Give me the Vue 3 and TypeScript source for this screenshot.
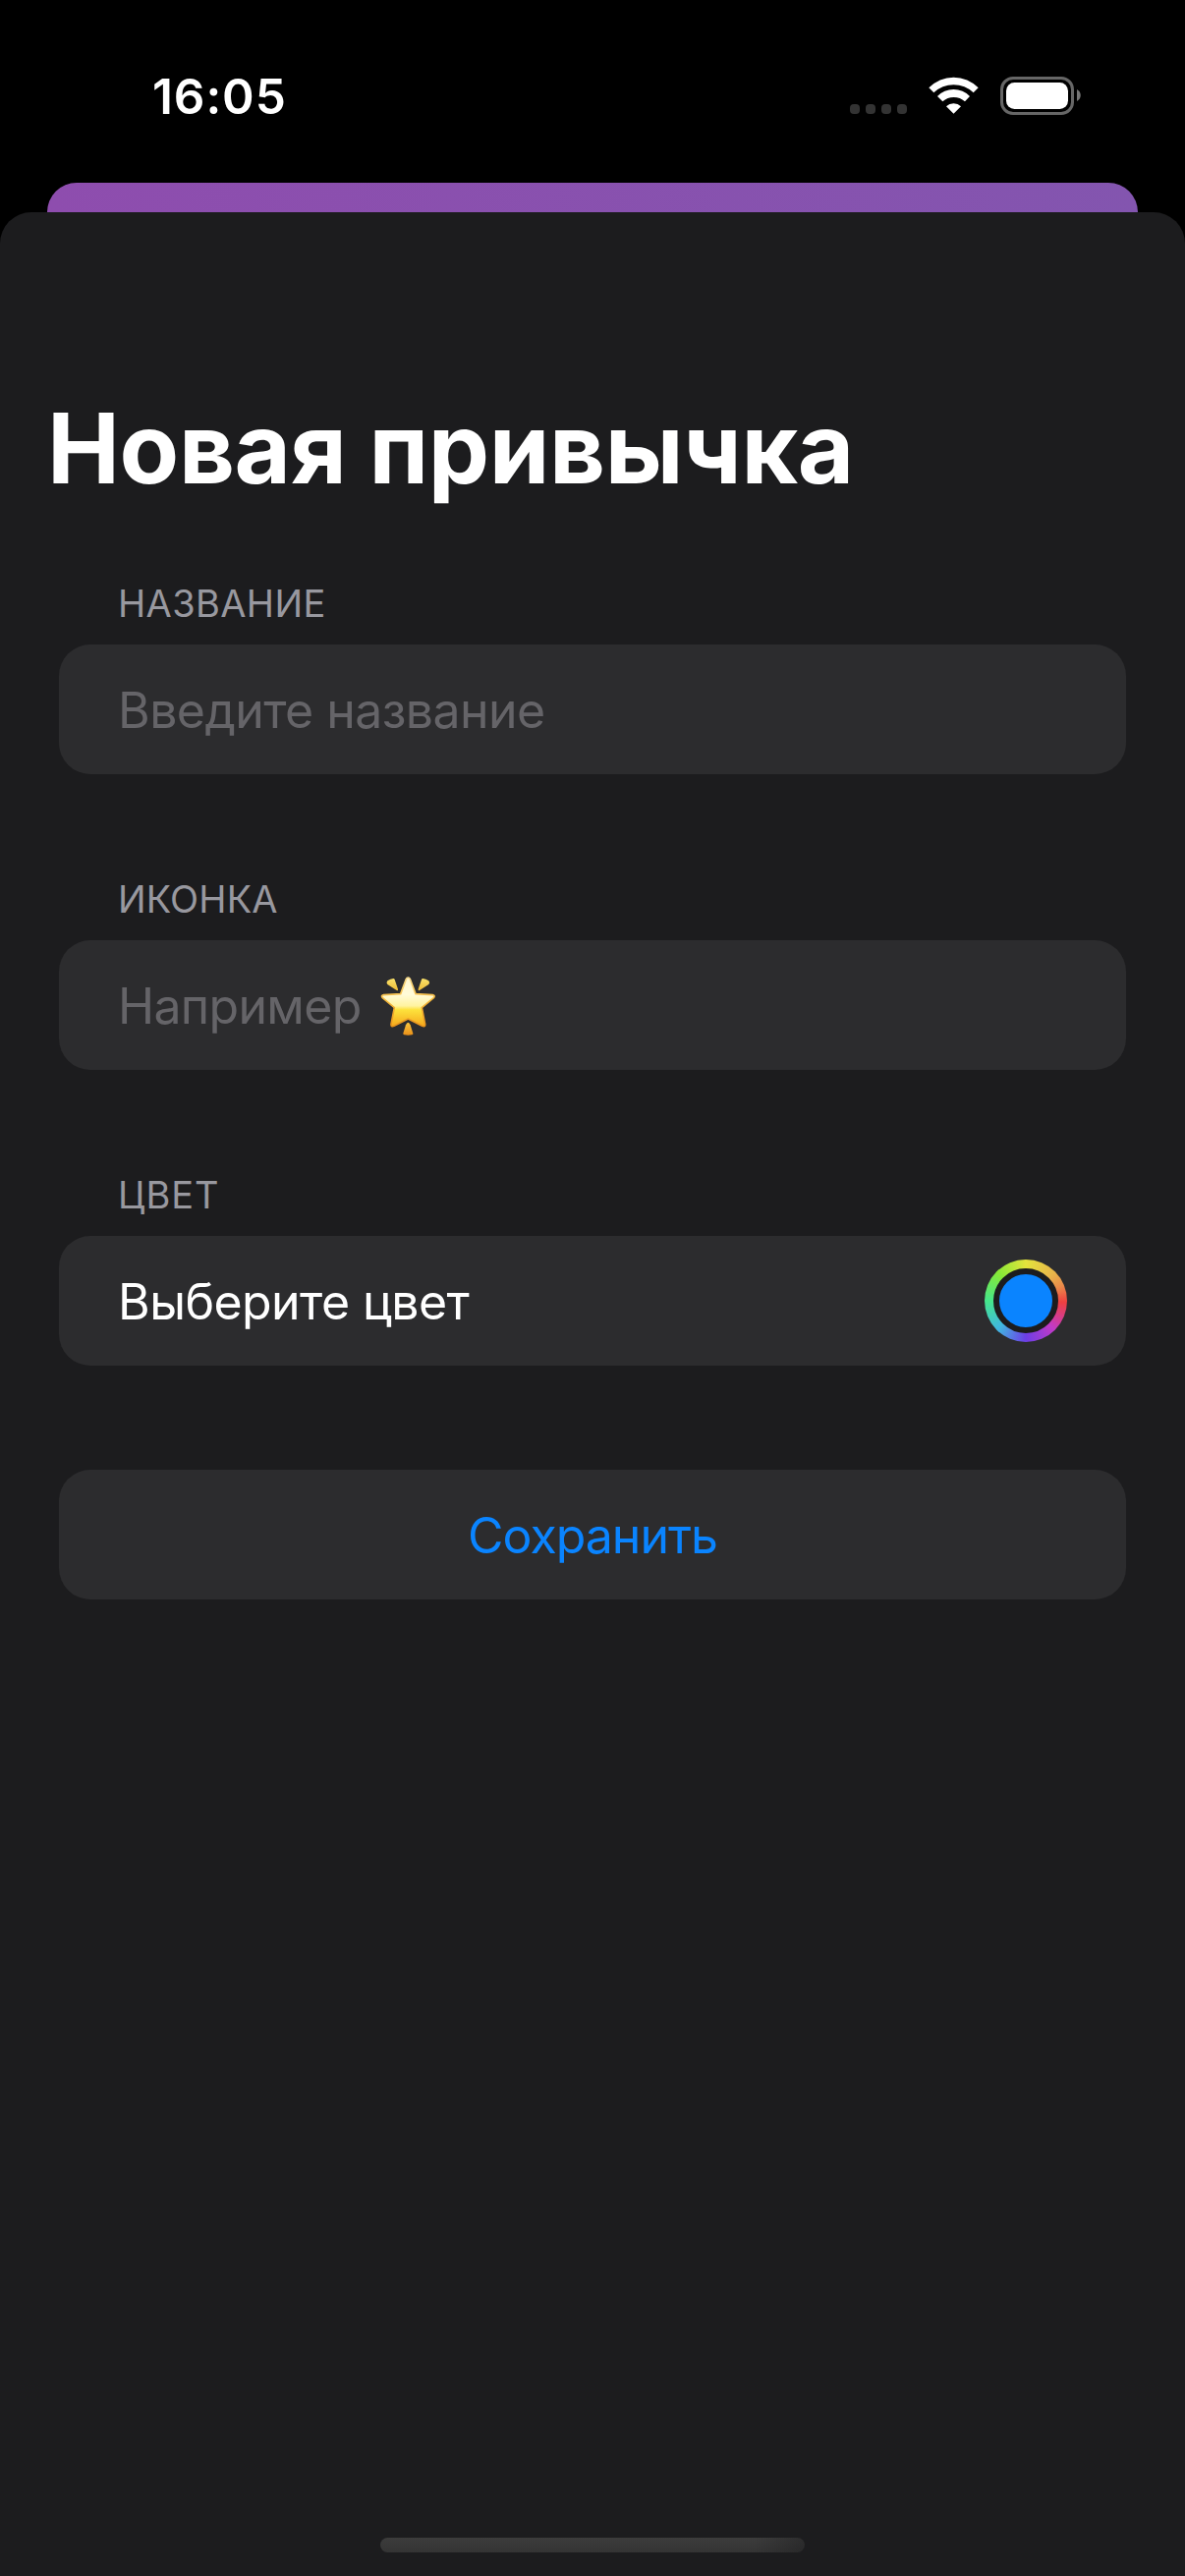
<script setup lang="ts">
interface Section {
  id: string
  label: string
  text: string
  kind: 'placeholder' | 'color'
  star?: boolean
}

const sections: Section[] = [
  { id: 'name', label: 'НАЗВАНИЕ', text: 'Введите название', kind: 'placeholder' },
  { id: 'icon', label: 'ИКОНКА', text: 'Например', kind: 'placeholder', star: true },
  { id: 'color', label: 'ЦВЕТ', text: 'Выберите цвет', kind: 'color' },
]
</script>

<template>
  <div class="screen">
    <header class="status">
      <span class="time">16:05</span>
      <div class="indicators">
        <div class="dots"><i v-for="n in 4" :key="n"></i></div>
        <svg class="wifi" width="51" height="38" viewBox="315 55 153 114">
          <g fill="#fff">
            <path d="M316 89A105 105 0 0 1 467 89L452 104A87 87 0 0 0 331 104Z" />
            <path d="M342 115A69 69 0 0 1 441 115L426 131A51 51 0 0 0 358 131Z" />
            <path d="M369 146A32 32 0 0 1 414 146L391.500 168Z" />
          </g>
        </svg>
        <svg class="battery" width="82" height="39" viewBox="0 0 82 39">
          <rect x="1.500" y="1.500" width="72" height="36" rx="11.500" fill="none" stroke="#666" stroke-width="3" />
          <rect x="6" y="6" width="63" height="27" rx="8.500" fill="#fff" />
          <path d="M78 13C83 15.500 83 22.500 78 25Z" fill="#767676" />
        </svg>
      </div>
    </header>
    <div class="back-card"></div>
    <main class="sheet">
      <h1>Новая привычка</h1>
      <section v-for="s in sections" :key="s.id" :class="s.id">
        <div class="label">{{ s.label }}</div>
        <div class="field" :class="s.kind">
          <span class="text">{{ s.text }}</span>
          <svg v-if="s.star" class="star" width="60" height="64" viewBox="0 0 180 192">
            <defs>
              <linearGradient id="body" x1="0" y1="0" x2="0" y2="1">
                <stop offset="0" stop-color="#fff6cf" />
                <stop offset=".35" stop-color="#fffbd8" />
                <stop offset=".58" stop-color="#fff3a0" />
                <stop offset=".66" stop-color="#fde23c" />
                <stop offset="1" stop-color="#f5a81c" />
              </linearGradient>
              <linearGradient id="edge" x1="0" y1="0" x2="0" y2="1">
                <stop offset="0" stop-color="#f8dc8c" />
                <stop offset=".45" stop-color="#f4b83c" />
                <stop offset="1" stop-color="#ea941b" />
              </linearGradient>
              <linearGradient id="ray" x1="0" y1="0" x2="0" y2="1">
                <stop offset="0" stop-color="#fbe36c" />
                <stop offset="1" stop-color="#eebb35" />
              </linearGradient>
              <linearGradient id="tail" x1="0" y1="0" x2="0" y2="1">
                <stop offset="0" stop-color="#fbc740" />
                <stop offset="1" stop-color="#e88f18" />
              </linearGradient>
            </defs>
            <path d="M25 22Q34 16 43 15Q46 15 47 18L57 47Q58 54 53 51L25 33Q20 28 25 22Z" fill="url(#ray)" />
            <path d="M151 22Q142 16 133 15Q130 15 129 18L119 47Q118 54 123 51L151 33Q156 28 151 22Z" fill="url(#ray)" />
            <path
              d="M88 12Q92 12 94 17L111 62L163 65Q172 67 166 74L130 104L140 155Q140 164 131 160L88 138L45 160Q36 164 36 155L46 104L10 74Q4 67 13 65L65 62L82 17Q84 12 88 12Z"
              fill="url(#body)" stroke="url(#edge)" stroke-width="5" stroke-linejoin="round" />
            <path d="M88 149Q92 149 95 157L103 182Q104 186 100 187Q88 189 76 187Q72 186 73 182L81 157Q84 149 88 149Z" fill="url(#tail)" />
          </svg>
          <span v-if="s.kind === 'color'" class="well"><i></i></span>
        </div>
      </section>
      <button class="field save" type="button"><span class="text">Сохранить</span></button>
      <div class="home"></div>
    </main>
  </div>
</template>

<style>
body {
  margin: 0;
  background: #000;
}
</style>

<style scoped>
.screen {
  width: 1206px;
  height: 2622px;
  display: flex;
  flex-direction: column;
  overflow: hidden;
  background: #000;
  color: #fff;
  font-family: Inter, "Liberation Sans", sans-serif;
}
.status {
  height: 186px;
  flex: none;
  box-sizing: border-box;
  display: flex;
  justify-content: space-between;
  align-items: flex-start;
  padding: 68px 106px 0 155px;
}
.time {
  font-size: 49.5px;
  font-weight: 600;
  line-height: 60px;
  letter-spacing: 0.9px;
}
.indicators {
  display: flex;
  margin-top: 10px;
  height: 39px;
}
.dots {
  display: flex;
  gap: 6px;
  align-items: flex-end;
  height: 38px;
  margin-right: 22px;
}
.dots i {
  width: 10px;
  height: 10px;
  border-radius: 4px;
  background: #333;
}
.wifi {
  margin-right: 22px;
}
.back-card {
  height: 30px;
  flex: none;
  margin: 0 48px;
  border-radius: 30px 30px 0 0;
  background: linear-gradient(90deg, #8e4dae, #8355af);
}
.sheet {
  flex: 1;
  box-sizing: border-box;
  display: flex;
  flex-direction: column;
  padding: 180px 60px 24px;
  border-radius: 32px 32px 0 0;
  background: #1c1c1e;
}
h1 {
  margin: 0 0 0 -12px;
  font-size: 99px;
  font-weight: 700;
  line-height: 120px;
  letter-spacing: -0.39px;
  white-space: nowrap;
}
section {
  margin-bottom: 106px;
}
.name {
  margin-top: 77px;
}
.label {
  height: 63px;
  padding-left: 60px;
  font-size: 38px;
  line-height: 43px;
  color: #98989f;
}
.name .label {
  letter-spacing: 0.36px;
}
.icon .label {
  letter-spacing: 0.12px;
}
.color .label {
  letter-spacing: 1px;
}
.field {
  height: 132px;
  box-sizing: border-box;
  display: flex;
  align-items: center;
  padding: 0 60px;
  border-radius: 32px;
  background: #2c2c2e;
  font-size: 50px;
  line-height: 60px;
  letter-spacing: -0.57px;
  white-space: nowrap;
}
.text {
  padding-top: 2px;
}
.placeholder {
  color: #656468;
}
.icon .field {
  letter-spacing: -0.69px;
}
.field.color {
  justify-content: space-between;
}
.star {
  margin-left: 18.7px;
}
.well {
  width: 84px;
  height: 84px;
  box-sizing: border-box;
  padding: 9px;
  border-radius: 50%;
  background: conic-gradient(#e4e43c, #e8b54a 45deg, #ea8a4a 68deg, #ee4040 92deg, #c23ac6 135deg, #6c3ee6 180deg, #40b8e0 225deg, #45e68a 270deg, #86e836 315deg, #e4e43c);
}
.well i {
  display: block;
  width: 66px;
  height: 66px;
  box-sizing: border-box;
  border: 6px solid #1c1c1e;
  border-radius: 50%;
  background: #0a84ff;
}
.save {
  justify-content: center;
  border: 0;
  color: #0a84ff;
  font-family: inherit;
  letter-spacing: -1px;
}
.home {
  width: 432px;
  height: 15px;
  margin: auto auto 0;
  border-radius: 8px;
  background:
    linear-gradient(100deg, transparent 88%, rgba(28, 28, 30, 0.5)),
    linear-gradient(#3c3c3c, #343434);
}
</style>
